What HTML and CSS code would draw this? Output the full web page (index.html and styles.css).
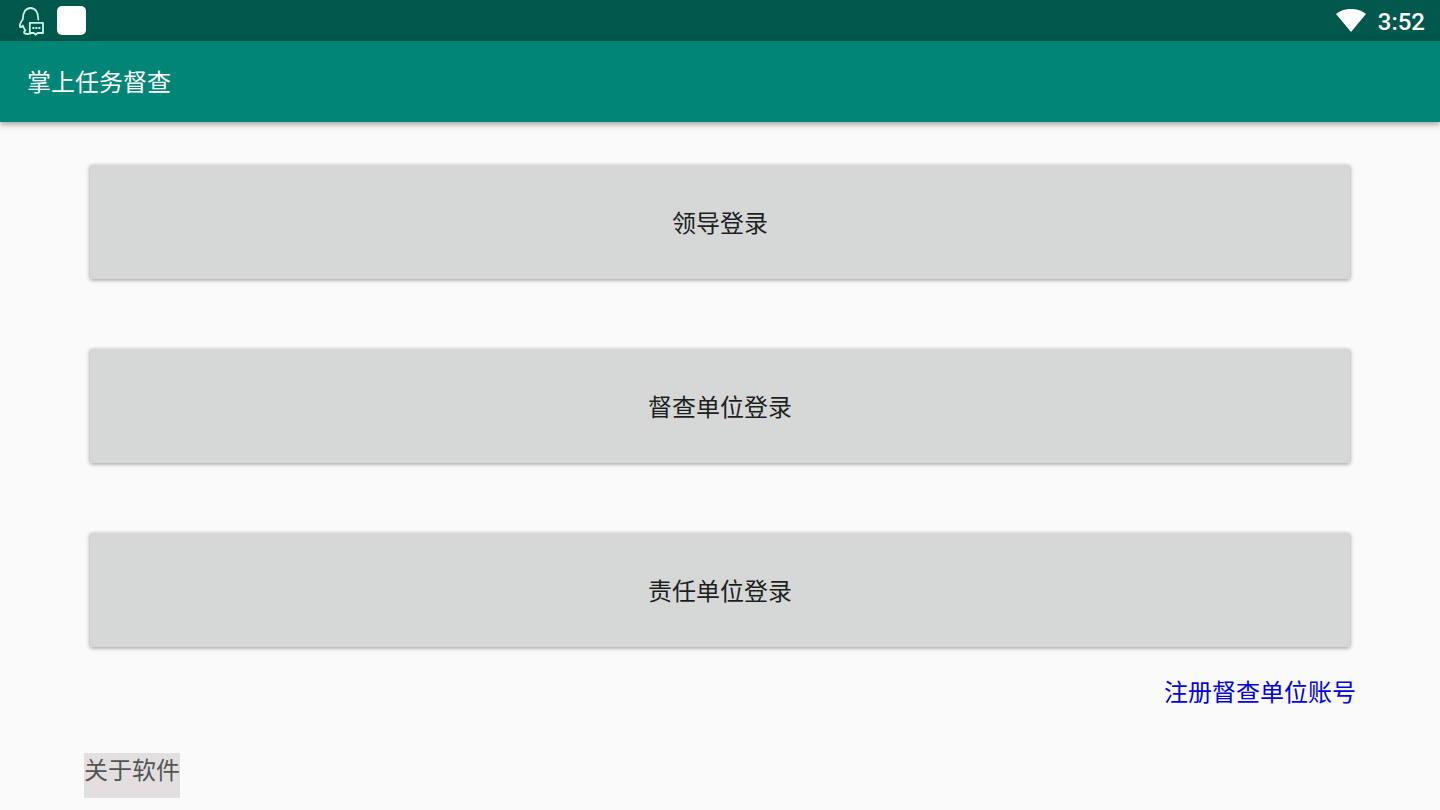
FILE: index.html
```html
<!DOCTYPE html>
<html lang="zh-CN">
<head>
<meta charset="utf-8">
<meta name="viewport" content="width=device-width, initial-scale=1">
<title>掌上任务督查</title>
<link rel="stylesheet" href="styles.css">
</head>
<body>
<div class="status-bar">
  <div class="status-group">
    <svg class="icon-chat" viewBox="0 0 28 30" aria-hidden="true">
      <path d="M8.500 24.500C7.300 23.300 6.500 21.500 5.800 19.500C4.900 21 3.600 21.700 3 20.700C2.300 18.600 3.900 15.900 5.800 13.300C5.800 6.500 8.700 2 13.500 2C18.300 2 21.300 6.500 21.300 13.500M8.500 24.500C6.400 25.300 6.200 28 10.200 28C12.500 28 14 27.700 15 27"/>
      <path d="M12.800 16.800H26V27H20.500L18.500 28.700L16.800 27H12.800Z"/>
      <path class="dots" d="M15.400 21.900h2M18.400 21.900h2M21.400 21.900h2"/>
    </svg>
    <span class="icon-square"></span>
  </div>
  <div class="status-group">
    <svg class="icon-wifi" viewBox="0 0 30 24" aria-hidden="true">
      <path d="M0 5C8.500-1.800 21.500-1.800 30 5L15 23Z"/>
    </svg>
    <time class="clock">3:52</time>
  </div>
</div>
<header class="app-bar"><h1 class="app-title">掌上任务督查</h1></header>
<main class="content">
  <div class="login-list">
    <button class="login-button" type="button">领导登录</button>
    <button class="login-button" type="button">督查单位登录</button>
    <button class="login-button" type="button">责任单位登录</button>
  </div>
  <a class="register-link" href="#register">注册督查单位账号</a>
  <a class="about-link" href="#about">关于软件</a>
</main>
</body>
</html>
```
FILE: styles.css
```css
* {
  box-sizing: border-box;
}

body {
  margin: 0;
  background: #fafafa;
  color: #1d1e1e;
  font-family: Roboto, "Noto Sans CJK SC", sans-serif;
  font-size: 24px;
  line-height: 36px;
}

.status-bar {
  display: flex;
  align-items: center;
  justify-content: space-between;
  height: 41px;
  padding: 0 15px 0 17px;
  background: #00574b;
  color: #fff;
}

.status-group {
  display: flex;
  align-items: center;
  gap: 12px;
}

.icon-chat {
  width: 28px;
  height: 30px;
  fill: none;
  stroke: #c9f3e8;
  stroke-width: 1.8;
  stroke-linejoin: round;
  stroke-linecap: round;
}

.icon-chat .dots {
  stroke-width: 2;
  stroke-linecap: butt;
}

.icon-square {
  width: 29px;
  height: 29px;
  border-radius: 5px;
  background: #fff;
}

.icon-wifi {
  width: 30px;
  height: 24px;
  fill: #fff;
}

.clock {
  padding-top: 2px;
  font-weight: 500;
}

.app-bar {
  display: flex;
  align-items: center;
  height: 81px;
  padding: 2px 27px 0;
  background: #008577;
  color: #fff;
  box-shadow: 0 3px 5px rgba(0, 0, 0, 0.3);
}

.app-title {
  margin: 0;
  font-size: 24px;
  font-weight: 400;
}

.content {
  display: flex;
  flex-direction: column;
  padding: 43px 84px 12px;
}

.login-list {
  display: flex;
  flex-direction: column;
  gap: 70px;
  padding: 0 6px;
}

.login-button {
  height: 114px;
  padding: 4px 0 0;
  border: 0;
  border-radius: 2px;
  background: #d6d8d7;
  color: inherit;
  font: inherit;
  box-shadow: 0 1px 4px rgba(0, 0, 0, 0.4);
}

.register-link {
  align-self: flex-end;
  margin-top: 28px;
  color: #0000e0;
  text-decoration: none;
}

.about-link {
  align-self: flex-start;
  height: 45px;
  margin-top: 42px;
  background: #e3dfe0;
  color: #555;
  text-decoration: none;
}
```
